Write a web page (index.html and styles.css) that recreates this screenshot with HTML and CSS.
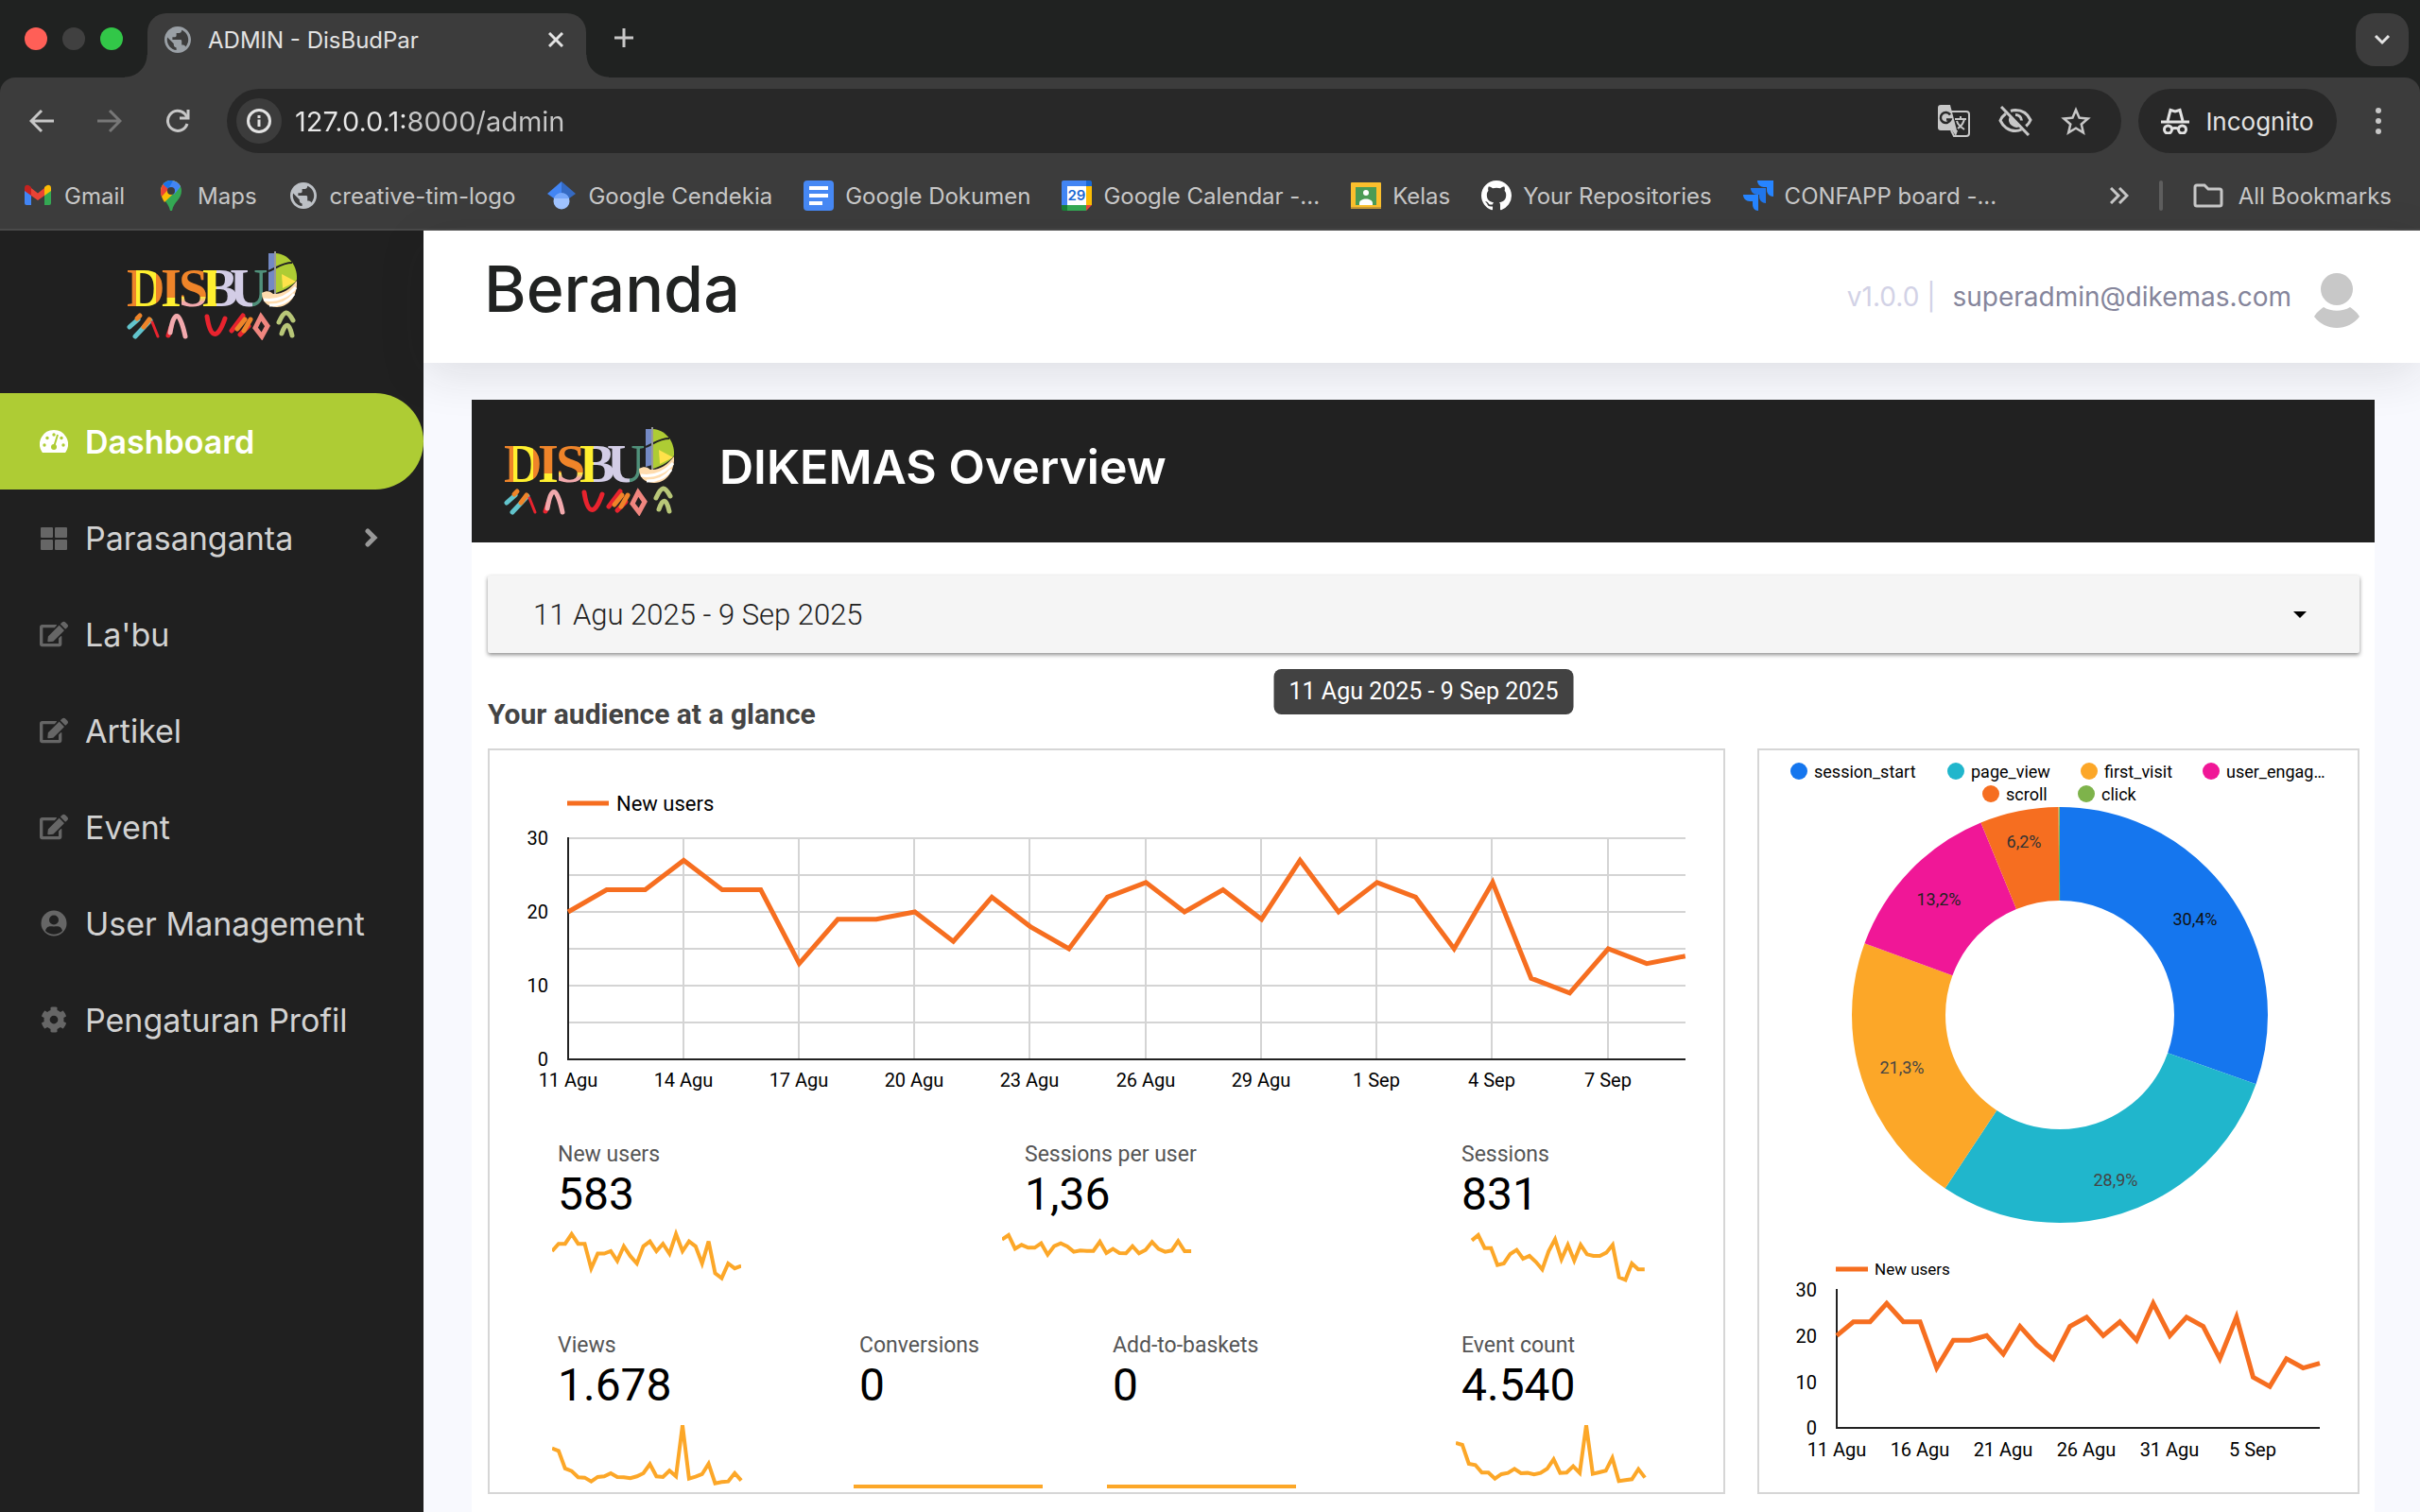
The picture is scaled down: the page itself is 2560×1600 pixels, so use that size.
FILE: index.html
```html
<!DOCTYPE html>
<html lang="id">
<head>
<meta charset="utf-8">
<meta name="viewport" content="width=device-width, initial-scale=1">
<title>ADMIN - DisBudPar</title>
<link rel="stylesheet" href="styles.css">
</head>
<body>

<svg class="defs" aria-hidden="true">
  <defs>
    <linearGradient id="d-fill"><stop offset=".24" stop-color="#ef8429"/><stop offset=".24" stop-color="#fff02f"/><stop offset=".76" stop-color="#fff02f"/><stop offset=".76" stop-color="#ef8429"/></linearGradient>
    <linearGradient id="i-fill" x2="0" y2="1"><stop offset=".66" stop-color="#ef8429"/><stop offset=".66" stop-color="#fff02f"/></linearGradient>
    <linearGradient id="s-fill" x2="0" y2="1"><stop offset=".64" stop-color="#ef8429"/><stop offset=".64" stop-color="#fff02f"/><stop offset=".74" stop-color="#f2a9ad"/></linearGradient>
    <linearGradient id="b-fill"><stop offset=".4" stop-color="#fff02f"/><stop offset=".4" stop-color="#d3cde6"/></linearGradient>
    <linearGradient id="u-fill"><stop offset=".6" stop-color="#d3cde6"/><stop offset=".6" stop-color="#50907a"/></linearGradient>
    <symbol id="logo" viewBox="0 0 180 94">
      <g class="logo-text">
        <text y="58" x="0" fill="url(#d-fill)">D</text>
        <text y="58" x="36" fill="url(#i-fill)">I</text>
        <text y="58" x="55" fill="url(#s-fill)">S</text>
        <text y="58" x="80" fill="url(#b-fill)">B</text>
        <text y="58" x="109" fill="url(#u-fill)">U</text>
      </g>
      <path d="M150 2v40l7-2V2z" fill="#7489c4"/>
      <path d="M158 2c13 1 23 13 22 28-4 6-11 10-22 14z" fill="#aecc34"/>
      <path d="M164 24l15 8-14 7z" fill="#ffe24a"/>
      <path d="M150 21c8-3 14-9 25-9" fill="none" stroke="#222" stroke-width="2"/>
      <path d="M157 0v46" stroke="#999" stroke-width="2"/>
      <path d="M143 44c5-3 9-2 12 1 9 1 18-5 25-14 1 17-9 28-21 28-9 0-16-5-16-15z" fill="#ffdcae"/>
      <path d="M145 51c14 2 26-4 34-13M151 57c12 0 21-5 26-12" fill="none" stroke="#fff" stroke-width="3"/>
      <g fill="none" stroke-width="5" stroke-linecap="round">
        <path d="M3 80l9-8M9 90l16-17" stroke="#62c4cc"/>
        <path d="M11 71l3-3M18 80l6-8" stroke="#ef8429"/>
        <path d="M27 75l6 15" stroke="#e8232e" stroke-width="3"/>
        <path d="M44 89l3-9" stroke="#e8232e"/>
        <path d="M46 86c4-24 10-24 16 4" stroke="#f2a9ad"/>
        <path d="M85 69c3 20 10 28 19 2" stroke="#e8232e"/>
        <path d="M111 84l12-16M120 88l9-9" stroke="#e8232e"/>
        <path d="M117 82l8-10M124 84l7-12" stroke="#ef8429"/>
        <path d="M142 69l7 10-6 11-7-9z" stroke="#f0867f"/>
        <path d="M161 75c6-13 9-13 15-2M164 87c4-12 8-12 11 2" stroke="#b8c778"/>
      </g>
    </symbol>
    <symbol id="icon-globe" viewBox="2 2 20 20"><path fill="currentColor" d="M12 2C6.48 2 2 6.48 2 12s4.480 10 10 10 10-4.480 10-10S17.520 2 12 2zm-1 17.930c-3.950-.49-7-3.850-7-7.930 0-.62.08-1.210.21-1.790L9 15v1c0 1.100.9 2 2 2v1.930zm6.900-2.540c-.26-.81-1-1.390-1.900-1.390h-1v-3c0-.55-.45-1-1-1H8v-2h2c.55 0 1-.45 1-1V7h2c1.100 0 2-.9 2-2v-.41c2.930 1.190 5 4.060 5 7.410 0 2.080-.8 3.970-2.100 5.390z"/></symbol>
    <symbol id="icon-edit" viewBox="0 0 576 512"><path fill="currentColor" d="M402.6 83.2l90.2 90.2c3.8 3.8 3.8 10 0 13.8L274.4 405.6l-92.8 10.3c-12.4 1.4-22.9-9.1-21.5-21.5l10.3-92.8L388.8 83.2c3.8-3.8 10-3.8 13.8 0zm162-22.900l-48.800-48.800c-15.200-15.200-39.900-15.200-55.200 0l-35.400 35.400c-3.800 3.800-3.800 10 0 13.800l90.200 90.200c3.800 3.800 10 3.800 13.800 0l35.400-35.400c15.200-15.300 15.200-40 0-55.200zM384 346.200V448H64V128h229.800c3.200 0 6.200-1.300 8.500-3.500l40-40c7.600-7.600 2.200-20.500-8.500-20.500H48C21.500 64 0 85.500 0 112v352c0 26.500 21.500 48 48 48h352c26.500 0 48-21.500 48-48V306.200c0-10.700-12.900-16-20.500-8.500l-40 40c-2.200 2.300-3.500 5.300-3.500 8.500z"/></symbol>
    <polyline id="new-users" vector-effect="non-scaling-stroke" points="0,20 1,23 2,23 3,27 4,23 5,23 6,13 7,19 8,19 9,20 10,16 11,22 12,18 13,15 14,22 15,24 16,20 17,23 18,19 19,27 20,20 21,24 22,22 23,15 24,24 25,11 26,9 27,15 28,13 29,14"/>
  </defs>
</svg>

<header class="browser">
  <div class="tab-strip">
    <div class="lights"><i class="light light-red"></i><i class="light light-off"></i><i class="light light-green"></i></div>
    <div class="tab">
      <svg class="tab-icon" width="28" height="28"><use href="#icon-globe"/></svg>
      <span class="tab-title">ADMIN - DisBudPar</span>
      <button class="plain" aria-label="Close tab"><svg width="16" height="16" viewBox="0 0 16 16" fill="none" stroke="#e3e3e3" stroke-width="3"><path d="M1 1l14 14M15 1L1 15"/></svg></button>
    </div>
    <button class="plain new-tab" aria-label="New tab"><svg width="20" height="20" viewBox="0 0 20 20" fill="none" stroke="#c7c7c7" stroke-width="3"><path d="M10 0v20M0 10h20"/></svg></button>
    <button class="plain tab-search" aria-label="Search tabs"><svg width="20" height="12" viewBox="0 0 20 12" fill="none" stroke="#e3e3e3" stroke-width="3"><path d="M3 2l7 7 7-7"/></svg></button>
  </div>

  <div class="toolbar">
    <button class="plain nav-btn" aria-label="Back"><svg width="26" height="26" viewBox="0 0 26 26" fill="none" stroke="#c7c7c7" stroke-width="3"><path d="M26 13H3M13 2L2 13l11 11"/></svg></button>
    <button class="plain nav-btn" aria-label="Forward"><svg width="26" height="26" viewBox="0 0 26 26" fill="none" stroke="#777" stroke-width="3"><path d="M0 13h23M13 2l11 11-11 11"/></svg></button>
    <button class="plain nav-btn" aria-label="Reload"><svg width="26" height="26" viewBox="0 0 26 26" fill="none" stroke="#c7c7c7" stroke-width="3"><path d="M23 16a10.500 10.500 0 1 1-2.500-10.500L23 9"/><path d="M24 1v9h-9"/></svg></button>
    <div class="omnibox">
      <button class="plain site-info" aria-label="Site information"><svg width="28" height="28" viewBox="0 0 28 28" fill="none" stroke="#e3e3e3" stroke-width="3"><circle cx="14" cy="14" r="11.500"/><path d="M14 12.500V20M14 8v3"/></svg></button>
      <input class="url" type="text" aria-label="Address" value="127.0.0.1:8000/admin">
      <button class="plain" aria-label="Translate"><svg width="34" height="34" viewBox="0 0 34 34"><path d="M14 7h16a3 3 0 0 1 3 3v20a3 3 0 0 1-3 3H17l-3-6" fill="none" stroke="#c7c7c7" stroke-width="2"/><path d="M3 0h10l7 27H3a3 3 0 0 1-3-3V3a3 3 0 0 1 3-3z" fill="#c7c7c7"/><path d="M13 10.500a5.500 5.500 0 1 0 .5 5H9" fill="none" stroke="#282828" stroke-width="2.500"/><path d="M18 15h12M24 12v3M28 15c-1 5-4 8-7 10M20 17c1 4 5 7 8 9" fill="none" stroke="#c7c7c7" stroke-width="2"/><path d="M15 27l4 6 2-6z" fill="#c7c7c7"/></svg></button>
      <button class="plain" aria-label="Third-party cookies blocked"><svg width="36" height="32" viewBox="0 0 36 32" fill="none" stroke="#c7c7c7" stroke-width="3"><path d="M13 5.500a17 17 0 0 1 5-1c7 0 13 4 16 10.500-1 2.500-2.700 4.700-4.800 6.500M24.500 25a17 17 0 0 1-6.500 1.500C11 26.500 5 22 2 15.500c1.300-3 3.300-5.300 5.800-7.200"/><path d="M12 11a8 8 0 0 0 12 10z" fill="#c7c7c7" stroke="none"/><path d="M18 9.500a6.500 6.500 0 0 1 6.500 6"/><path d="M3 1l29 30"/></svg></button>
      <button class="plain" aria-label="Bookmark this page"><svg width="32" height="30" viewBox="2 2 20 19"><path fill="#c7c7c7" d="M22 9.240l-7.190-.62L12 2 9.190 8.630 2 9.240l5.460 4.730L5.820 21 12 17.270 18.180 21l-1.630-7.030L22 9.240zM12 15.400l-3.760 2.270 1-4.280-3.320-2.880 4.380-.38L12 6.100l1.710 4.040 4.380.38-3.320 2.880 1 4.280L12 15.400z"/></svg></button>
    </div>
    <button class="plain incognito"><svg width="30" height="28" viewBox="0 0 30 28" fill="none" stroke="#e3e3e3" stroke-width="3"><path d="M0 15h30"/><path d="M7 14l3-11.500 5 1.500 5-1.500L23 14"/><circle cx="7.500" cy="23" r="4"/><circle cx="22.500" cy="23" r="4"/><path d="M11 22.500c3-1.500 5-1.500 8 0"/></svg><span>Incognito</span></button>
    <button class="plain menu-btn" aria-label="Menu"><svg width="6" height="28" viewBox="0 0 6 28" fill="#c7c7c7"><circle cx="3" cy="3" r="3"/><circle cx="3" cy="14" r="3"/><circle cx="3" cy="25" r="3"/></svg></button>
  </div>

  <nav class="bookmarks" aria-label="Bookmarks">
    <a href="#"><svg width="32" height="32" viewBox="0 0 32 32"><path d="M2 10v14a2 2 0 0 0 2 2h5V14z" fill="#4285f4"/><path d="M30 10v14a2 2 0 0 1-2 2h-5V14z" fill="#34a853"/><path d="M9 8l7 5.500L23 8v8l-7 5-7-5z" fill="#ea4335"/><path d="M2 11V8c0-3 3-4 5-2.500L9 7v9z" fill="#c5221f"/><path d="M30 11V8c0-3-3-4-5-2.500L23 7v9z" fill="#fbbc04"/></svg>Gmail</a>
    <a href="#"><svg width="32" height="32" viewBox="0 0 32 32"><path d="M16 0a11 11 0 0 1 11 11c0 9-8 11-10 21h-2C13 22 5 20 5 11A11 11 0 0 1 16 0z" fill="#34a853"/><path d="M16 0a11 11 0 0 1 10 6.500L9 23c-2-3-4-7-4-12A11 11 0 0 1 16 0z" fill="#fbbc04"/><path d="M16 0a11 11 0 0 1 10 6.500L19 15 7.500 4A11 11 0 0 1 16 0z" fill="#4285f4"/><path d="M7.500 4l6 5L6 17A14 14 0 0 1 7.500 4z" fill="#ea4335"/><path d="M7.500 4A11 11 0 0 1 18 0.200L13 9z" fill="#1a73e8"/><circle cx="16" cy="11" r="4" fill="#3c3c3c"/></svg>Maps</a>
    <a href="#"><svg class="globe" width="32" height="28"><use href="#icon-globe"/></svg>creative-tim-logo</a>
    <a href="#"><svg width="32" height="32" viewBox="0 0 32 32"><path d="M16 1L1 14l7 5h8z" fill="#4285f4"/><path d="M16 1l15 13-7 5h-8z" fill="#356ac3"/><circle cx="16" cy="22" r="8.500" fill="#a0c3ff"/><path d="M8 19a8.500 8.500 0 0 1 16 0z" fill="#76a7fa"/></svg>Google Cendekia</a>
    <a href="#"><svg width="32" height="32" viewBox="0 0 32 32"><rect width="32" height="32" rx="4" fill="#4688f4"/><path d="M6 8h20M6 16h20M6 24h14" stroke="#fff" stroke-width="4"/></svg>Google Dokumen</a>
    <a href="#"><svg width="32" height="32" viewBox="0 0 32 32"><path d="M0 2a2 2 0 0 1 2-2h24v6H6v20H0z" fill="#4285f4"/><path d="M26 0h4a2 2 0 0 1 2 2v4h-6z" fill="#1967d2"/><path d="M26 6h6v20h-6z" fill="#fbbc04"/><path d="M6 26h20v6H6z" fill="#34a853"/><path d="M0 26h6v6H2a2 2 0 0 1-2-2z" fill="#188038"/><path d="M26 26h6l-6 6z" fill="#ea4335"/><path d="M6 6h20v20H6z" fill="#fff"/><text x="16" y="21" class="cal-day">29</text></svg>Google Calendar -...</a>
    <a href="#"><svg width="32" height="32" viewBox="0 0 32 32"><rect y="2" width="32" height="28" rx="1" fill="#fbbf2d"/><rect y="28" width="32" height="2" fill="#c99a34"/><rect x="5" y="7" width="22" height="19" fill="#4b9b55"/><circle cx="16" cy="13" r="3" fill="#fff"/><path d="M9 24c0-6 14-6 14 0v2H9z" fill="#fff"/></svg>Kelas</a>
    <a href="#"><svg width="32" height="32" viewBox="0 0 16 16"><path fill="#fff" d="M8 0C3.580 0 0 3.580 0 8c0 3.540 2.290 6.530 5.470 7.590.4.07.55-.17.55-.38 0-.19-.01-.82-.01-1.490-2.010.37-2.530-.49-2.690-.94-.09-.23-.48-.94-.82-1.130-.28-.15-.68-.52-.01-.53.63-.01 1.080.58 1.230.82.72 1.210 1.870.87 2.330.66.07-.52.28-.87.51-1.070-1.780-.2-3.640-.89-3.640-3.950 0-.87.31-1.590.82-2.150-.08-.2-.36-1.020.08-2.120 0 0 .67-.21 2.200.82.64-.18 1.320-.27 2-.27s1.360.09 2 .27c1.530-1.040 2.200-.82 2.200-.82.44 1.100.16 1.920.08 2.120.51.56.82 1.270.82 2.150 0 3.070-1.870 3.750-3.650 3.950.29.25.54.73.54 1.480 0 1.070-.01 1.930-.01 2.200 0 .21.15.46.55.38A8.010 8.010 0 0 0 16 8c0-4.420-3.580-8-8-8z"/></svg>Your Repositories</a>
    <a href="#"><svg width="32" height="32" viewBox="0 0 32 32" fill="#2684ff"><path d="M15 0h17v17c-4 0-7-3-7-7V7h-3c-4 0-7-3-7-7z"/><path d="M8 8h16v16c-4 0-7-3-7-7v-2h-2c-4 0-7-3-7-7z" fill="#2176ea"/><path d="M0 15h16v17c-4 0-6-3-6-7v-3H7c-4 0-7-3-7-7z"/></svg>CONFAPP board -...</a>
    <div class="bookmarks-end">
      <button class="plain" aria-label="More bookmarks"><svg width="20" height="18" viewBox="0 0 20 18" fill="none" stroke="#c7c7c7" stroke-width="3"><path d="M1 1l8 8-8 8M10 1l8 8-8 8"/></svg></button>
      <span class="divider"></span>
      <a class="all" href="#"><svg width="32" height="26" viewBox="0 0 32 26" fill="none" stroke="#c7c7c7" stroke-width="3"><path d="M2 4a2 2 0 0 1 2-2h8l4 4h12a2 2 0 0 1 2 2v14a2 2 0 0 1-2 2H4a2 2 0 0 1-2-2z"/></svg>All Bookmarks</a>
    </div>
  </nav>
</header>

<div class="app">
  <aside class="sidebar">
    <svg class="brand" width="180" height="94" role="img" aria-label="DISBUD"><use href="#logo"/></svg>
    <nav class="side-nav" aria-label="Menu utama">
      <a class="active" href="#"><svg width="30" height="26" viewBox="0 0 30 26"><path d="M15 1a15 15 0 0 1 13 22.500c-.5 1-1 1.500-2 1.500H4c-1 0-1.500-.5-2-1.500A15 15 0 0 1 15 1z" fill="currentColor"/><g fill="#aecc34"><circle cx="5" cy="17" r="1.700"/><circle cx="8" cy="9.500" r="1.700"/><circle cx="15" cy="6" r="1.700"/><circle cx="23" cy="9.500" r="1.700"/><circle cx="25" cy="17" r="1.700"/><circle cx="15" cy="19" r="3"/></g><path d="M15 19l4-13" stroke="#aecc34" stroke-width="2"/></svg>Dashboard</a>
      <a href="#"><svg width="30" height="26" viewBox="0 0 30 26" fill="currentColor"><rect x="1" y="2" width="13" height="11" rx="1"/><rect x="16" y="2" width="13" height="11" rx="1"/><rect x="1" y="15" width="13" height="11" rx="1"/><rect x="16" y="15" width="13" height="11" rx="1"/></svg>Parasanganta<svg class="caret" width="14" height="20" viewBox="0 0 14 20" fill="none" stroke="currentColor" stroke-width="5" stroke-linecap="round"><path d="M3 3l7 7-7 7"/></svg></a>
      <a href="#"><svg width="30" height="28"><use href="#icon-edit"/></svg>La'bu</a>
      <a href="#"><svg width="30" height="28"><use href="#icon-edit"/></svg>Artikel</a>
      <a href="#"><svg width="30" height="28"><use href="#icon-edit"/></svg>Event</a>
      <a href="#"><svg width="30" height="28" viewBox="0 0 30 28"><circle cx="15" cy="14" r="13.500" fill="currentColor"/><circle cx="15" cy="10.500" r="5" fill="#202020"/><path d="M6 22c2-6 5-4.500 9-4.500s7-1.500 9 4.500c-5 5-13 5-18 0z" fill="#202020"/></svg>User Management</a>
      <a href="#"><svg width="30" height="28" viewBox="-16 0 544 512"><path fill="currentColor" d="M487.400 315.700l-42.600-24.600c4.300-23.200 4.300-47 0-70.200l42.600-24.600c4.900-2.800 7.100-8.600 5.500-14-11.100-35.600-30-67.800-54.700-94.600-3.800-4.100-10-5.100-14.800-2.300L380.800 110c-17.900-15.400-38.500-27.300-60.800-35.100V25.800c0-5.600-3.900-10.500-9.400-11.700-36.700-8.200-74.300-7.800-109.200 0-5.500 1.200-9.400 6.100-9.400 11.700V75c-22.200 7.900-42.800 19.800-60.800 35.100L88.700 85.500c-4.900-2.800-11-1.900-14.800 2.300-24.700 26.700-43.600 58.900-54.700 94.600-1.700 5.400.6 11.200 5.500 14L67.300 221c-4.300 23.200-4.300 47 0 70.200l-42.600 24.600c-4.900 2.800-7.100 8.600-5.500 14 11.100 35.600 30 67.800 54.700 94.600 3.800 4.100 10 5.100 14.800 2.300l42.600-24.600c17.900 15.400 38.500 27.300 60.800 35.100v49.200c0 5.600 3.900 10.500 9.400 11.700 36.700 8.200 74.300 7.800 109.200 0 5.500-1.200 9.400-6.100 9.400-11.700v-49.200c22.200-7.900 42.800-19.800 60.800-35.100l42.600 24.600c4.900 2.800 11 1.900 14.800-2.300 24.700-26.700 43.600-58.900 54.700-94.600 1.500-5.500-.7-11.300-5.600-14.100zM256 336c-44.100 0-80-35.900-80-80s35.900-80 80-80 80 35.900 80 80-35.900 80-80 80z"/></svg>Pengaturan Profil</a>
    </nav>
  </aside>

  <main class="main">
    <header class="topbar">
      <h1>Beranda</h1>
      <div class="account">
        <span class="version">v1.0.0 |</span>
        <a class="email" href="#">superadmin@dikemas.com</a>
        <svg width="48" height="66" viewBox="0 -8 48 66" fill="#c8c8c8" role="img" aria-label="Avatar"><circle cx="24" cy="17" r="17"/><path d="M0 46c3-5 7-8 10-10 8 5 20 5 28 0 3 2 7 5 10 10-12 16-36 16-48 0z"/></svg>
      </div>
    </header>

    <section class="report">
      <div class="banner">
        <svg width="180" height="94" role="img" aria-label="DISBUD"><use href="#logo"/></svg>
        <h2>DIKEMAS Overview</h2>
      </div>
      <div class="report-body">
        <div class="date-range">
          <select aria-label="Rentang tanggal"><option>11 Agu 2025 - 9 Sep 2025</option></select>
          <svg width="14" height="7" viewBox="0 0 14 7"><path d="M0 0h14L7 7z"/></svg>
          <div class="tooltip" role="tooltip">11 Agu 2025 - 9 Sep 2025</div>
        </div>
        <h3>Your audience at a glance</h3>

        <div class="cards">
          <article class="card">
            <svg class="chart" viewBox="0 0 1305 414" role="img" aria-label="New users per hari">
              <path d="M82 56h44" class="series"/>
              <text x="134" y="64" class="legend-lg">New users</text>
              <path class="grid" d="M83 93h1182M83 132h1182M83 171h1182M83 210h1182M83 249h1182M83 288h1182M205 93v234M327 93v234M449 93v234M571 93v234M694 93v234M816 93v234M938 93v234M1060 93v234M1183 93v234"/>
              <path class="axis" d="M83 92v235h1182"/>
              <use href="#new-users" class="series" transform="translate(83 327) scale(40.750 -7.800)"/>
              <g class="tick end"><text x="62" y="100">30</text><text x="62" y="178">20</text><text x="62" y="256">10</text><text x="62" y="334">0</text></g>
              <g class="tick mid"><text x="83" y="356">11 Agu</text><text x="205" y="356">14 Agu</text><text x="327" y="356">17 Agu</text><text x="449" y="356">20 Agu</text><text x="571" y="356">23 Agu</text><text x="694" y="356">26 Agu</text><text x="816" y="356">29 Agu</text><text x="938" y="356">1 Sep</text><text x="1060" y="356">4 Sep</text><text x="1183" y="356">7 Sep</text></g>
            </svg>
            <div class="metrics metrics-top">
              <dl class="metric"><dt>New users</dt><dd>583</dd>
                <dd class="spark"><svg width="200" height="60"><use href="#new-users" transform="translate(0 76) scale(6.900 -2.600)"/></svg></dd></dl>
              <dl class="metric metric-inset"><dt>Sessions per user</dt><dd>1,36</dd>
                <dd class="spark"><svg width="202" height="60"><polyline vector-effect="non-scaling-stroke" transform="translate(0 -120) scale(6.900 .3333)" points="0,395 1,381 2,424 3,412 4,421 5,421 6,407 7,443 8,416 9,407 10,417 11,434 12,430 13,431 14,431 15,402 16,438 17,425 18,438 19,439 20,416 21,439 22,428 23,403 24,425 25,434 26,430 27,400 28,432 29,432"/></svg></dd></dl>
              <dl class="metric"><dt>Sessions</dt><dd>831</dd>
                <dd class="spark"><svg width="202" height="60"><polyline vector-effect="non-scaling-stroke" transform="translate(17 -120) scale(6.770 .3333)" points="0,398 1,381 2,422 3,422 4,476 5,471 6,441 7,428 8,456 9,447 10,466 11,490 12,432 13,394 14,458 15,412 16,462 17,412 18,442 19,447 20,447 21,437 22,412 23,515 24,523 25,471 26,490 27,490"/></svg></dd></dl>
            </div>
            <div class="metrics metrics-bottom">
              <dl class="metric"><dt>Views</dt><dd>1.678</dd>
                <dd class="spark"><svg width="202" height="76"><polyline vector-effect="non-scaling-stroke" transform="translate(0 -322) scale(6.900 .3333)" points="0,1058 1,1066 2,1122 3,1130 4,1150 5,1151 6,1163 7,1149 8,1147 9,1137 10,1149 11,1150 12,1153 13,1147 14,1137 15,1108 16,1147 17,1149 18,1129 19,1147 20,985 21,1154 22,1148 23,1140 24,1107 25,1169 26,1165 27,1163 28,1137 29,1160"/></svg></dd></dl>
              <dl class="metric"><dt>Conversions</dt><dd>0</dd>
                <dd class="spark"><svg width="202" height="76"><path d="M0 71h200"/></svg></dd></dl>
              <dl class="metric"><dt>Add-to-baskets</dt><dd>0</dd>
                <dd class="spark"><svg width="202" height="76"><path d="M0 71h200"/></svg></dd></dl>
              <dl class="metric"><dt>Event count</dt><dd>4.540</dd>
                <dd class="spark"><svg width="202" height="76"><polyline vector-effect="non-scaling-stroke" transform="translate(0 -322) scale(6.900 .3333)" points="0,1041 1,1047 2,1107 3,1111 4,1135 5,1135 6,1154 7,1140 8,1136 9,1123 10,1137 11,1136 12,1141 13,1136 14,1123 15,1093 16,1136 17,1135 18,1115 19,1136 20,985 21,1139 22,1134 23,1129 24,1088 25,1162 26,1159 27,1156 28,1124 29,1151"/></svg></dd></dl>
            </div>
          </article>

          <article class="card">
            <svg class="chart" viewBox="0 0 633 500" role="img" aria-label="Event count per event">
              <g class="legend-sm">
                <circle cx="42" cy="22" r="9" fill="#1576ee"/><text x="58" y="29">session_start</text>
                <circle cx="208" cy="22" r="9" fill="#20b6cc"/><text x="224" y="29">page_view</text>
                <circle cx="349" cy="22" r="9" fill="#fca728"/><text x="365" y="29">first_visit</text>
                <circle cx="478" cy="22" r="9" fill="#f01797"/><text x="494" y="29">user_engag…</text>
                <circle cx="245" cy="46" r="9" fill="#f66e20"/><text x="261" y="53">scroll</text>
                <circle cx="346" cy="46" r="9" fill="#7eb34b"/><text x="362" y="53">click</text>
              </g>
              <g fill="none" stroke-width="99" transform="rotate(-90 318 280)">
                <circle cx="318" cy="280" r="170.500" pathLength="1000" stroke="#1576ee" stroke-dasharray="304 696"/>
                <circle cx="318" cy="280" r="170.500" pathLength="1000" stroke="#20b6cc" stroke-dasharray="289 711" stroke-dashoffset="-304"/>
                <circle cx="318" cy="280" r="170.500" pathLength="1000" stroke="#fca728" stroke-dasharray="213 787" stroke-dashoffset="-593"/>
                <circle cx="318" cy="280" r="170.500" pathLength="1000" stroke="#f01797" stroke-dasharray="132 868" stroke-dashoffset="-806"/>
                <circle cx="318" cy="280" r="170.500" pathLength="1000" stroke="#f66e20" stroke-dasharray="61 939" stroke-dashoffset="-938"/>
                <circle cx="318" cy="280" r="170.500" pathLength="1000" stroke="#7eb34b" stroke-dasharray="1 999" stroke-dashoffset="-999"/>
              </g>
              <g class="slice mid">
                <text x="461" y="185" fill="#111">30,4%</text><text x="377" y="461" fill="#444">28,9%</text><text x="151" y="342" fill="#444">21,3%</text><text x="190" y="164" fill="#222">13,2%</text><text x="280" y="103" fill="#333">6,2%</text>
              </g>
            </svg>
            <svg class="chart" viewBox="0 500 633 285" role="img" aria-label="New users">
              <path d="M81 549h34" class="series"/>
              <text x="122" y="555" class="legend-xs">New users</text>
              <path class="axis" d="M82 570v147h511"/>
              <use href="#new-users" class="series" transform="translate(82 717) scale(17.620 -4.880)"/>
              <g class="tick end"><text x="61" y="578">30</text><text x="61" y="627">20</text><text x="61" y="676">10</text><text x="61" y="724">0</text></g>
              <g class="tick mid"><text x="82" y="747">11 Agu</text><text x="170" y="747">16 Agu</text><text x="258" y="747">21 Agu</text><text x="346" y="747">26 Agu</text><text x="434" y="747">31 Agu</text><text x="522" y="747">5 Sep</text></g>
            </svg>
          </article>
        </div>
      </div>
    </section>
  </main>
</div>
</body>
</html>
```

FILE: styles.css
```css
* { box-sizing: border-box; }

body {
  margin: 0;
  min-height: 100vh;
  display: flex;
  flex-direction: column;
  font-family: Roboto, sans-serif;
  background: #f8f9fe;
}

svg { display: block; flex: none; }
a { color: inherit; text-decoration: none; }
h1, h2, h3, dl, dd { margin: 0; }

.defs { position: absolute; width: 0; height: 0; }

.plain {
  display: flex;
  align-items: center;
  justify-content: center;
  padding: 0;
  border: 0;
  background: none;
  font: inherit;
  color: inherit;
}

/* Browser window */
.browser {
  background: #202221;
  font-family: Inter, sans-serif;
  font-size: 24px;
  color: #c7c7c7;
}

.tab-strip {
  display: flex;
  align-items: flex-end;
  height: 82px;
  padding: 0 12px 0 26px;
}

.lights { display: flex; gap: 16px; width: 130px; padding-bottom: 29px; }
.light { width: 24px; height: 24px; border-radius: 50%; }
.light-red { background: #ff5f57; }
.light-off { background: #404040; }
.light-green { background: #32c748; }

.tab {
  position: relative;
  display: flex;
  align-items: center;
  gap: 18px;
  width: 464px;
  height: 68px;
  padding: 0 24px 12px 18px;
  border-radius: 20px 20px 0 0;
  background: #3c3c3c;
  color: #e3e3e3;
}
.tab::before,
.tab::after {
  content: "";
  position: absolute;
  bottom: 0;
  width: 24px;
  height: 24px;
}
.tab::before { right: 100%; background: radial-gradient(circle at 0 0, transparent 23px, #3c3c3c 24px); }
.tab::after { left: 100%; background: radial-gradient(circle at 100% 0, transparent 23px, #3c3c3c 24px); }
.tab-icon { color: #9aa0a6; }
.tab-title { flex: 1; }

.new-tab { width: 80px; height: 84px; }
.tab-search {
  width: 56px;
  height: 56px;
  margin: 0 0 12px auto;
  border-radius: 20px;
  background: #3c3c3c;
}

.toolbar {
  display: flex;
  align-items: center;
  height: 80px;
  padding: 12px 24px 0 8px;
  border-radius: 16px 16px 0 0;
  background: #3c3c3c;
}
.nav-btn { width: 72px; height: 68px; }

.omnibox {
  flex: 1;
  display: flex;
  align-items: center;
  gap: 30px;
  height: 68px;
  margin: 0 18px 0 16px;
  padding: 0 32px 0 10px;
  border-radius: 34px;
  background: #282828;
}
.site-info { width: 48px; height: 48px; margin-right: -16px; border-radius: 50%; background: #3c3c3c; }
.url {
  flex: 1;
  min-width: 0;
  padding: 0;
  border: 0;
  outline: 0;
  font: 29px Inter, sans-serif;
  color: transparent;
  background: linear-gradient(90deg, #e8e8e8 119px, #c7c7c7 119px);
  -webkit-background-clip: text;
  background-clip: text;
}

.incognito {
  gap: 17px;
  width: 210px;
  height: 68px;
  border-radius: 34px;
  background: #282828;
  font-size: 26px;
  color: #e3e3e3;
}
.menu-btn { width: 40px; height: 68px; margin-left: 24px; }

.bookmarks {
  display: flex;
  align-items: center;
  gap: 33px;
  height: 82px;
  padding: 10px 30px 0 24px;
  border-bottom: 2px solid #4a4a4a;
  background: #3c3c3c;
  white-space: nowrap;
}
.bookmarks a { display: flex; align-items: center; gap: 12px; }
.globe { color: #bdc1c6; }
.cal-day { font-size: 15px; font-weight: 600; fill: #1967d2; text-anchor: middle; }
.bookmarks-end { display: flex; align-items: center; gap: 32px; margin-left: auto; }
.bookmarks-end .all { gap: 16px; }
.divider { width: 4px; height: 32px; border-radius: 2px; background: #5e5e5e; }

/* Admin shell */
.app { flex: 1; display: flex; }

.sidebar {
  flex: none;
  width: 448px;
  padding-top: 22px;
  background: #202020;
  font-family: Inter, sans-serif;
  font-size: 34px;
  color: #d2d2d2;
}
.brand { margin: 0 auto 56px; }
.logo-text { font: bold 56px "Liberation Serif", serif; }

.side-nav { display: flex; flex-direction: column; }
.side-nav a {
  display: flex;
  align-items: center;
  gap: 18px;
  height: 102px;
  padding: 0 48px 0 42px;
}
.side-nav a svg { color: #666; }
.side-nav .caret { margin-left: auto; color: #999; }
.side-nav .active {
  border-radius: 0 51px 51px 0;
  background: #aecc34;
  font-weight: 600;
  color: #fff;
}
.side-nav .active svg { color: #fff; }

.main { flex: 1; min-width: 0; display: flex; flex-direction: column; }

.topbar {
  position: relative;
  display: flex;
  justify-content: space-between;
  height: 140px;
  padding: 0 64px 0 64px;
  background: #fff;
  box-shadow: 0 12px 50px rgba(32, 32, 32, 0.12);
  font-family: Inter, sans-serif;
}
.topbar h1 { font-size: 68px; line-height: 122px; font-weight: 500; color: #202221; }
.account { display: flex; align-items: center; font-size: 28px; color: #85859b; }
.version { margin-right: 18px; color: #d2d2e6; }
.email { margin-right: 24px; }

.report {
  position: relative;
  flex: 1;
  margin: 39px 48px 0 51px;
  background: #fff;
}

.banner {
  display: flex;
  align-items: center;
  gap: 48px;
  height: 151px;
  padding: 0 34px;
  background: #212121;
}
.banner h2 { padding-bottom: 9px; font: 600 50px Inter, sans-serif; color: #fff; }

.report-body { padding: 35px 16px 19px 17px; }

.date-range {
  position: relative;
  display: flex;
  align-items: center;
  height: 82px;
  padding-right: 56px;
  border-radius: 2px;
  background: #f5f5f5;
  box-shadow: 0 2px 4px rgba(0, 0, 0, 0.45);
}
.date-range select {
  flex: 1;
  height: 82px;
  padding: 0 48px;
  border: 0;
  outline: 0;
  appearance: none;
  background: none;
  font: 300 31px Roboto, sans-serif;
  color: #212121;
}
.tooltip {
  position: absolute;
  top: 100%;
  left: 50%;
  margin-top: 17px;
  transform: translateX(-50%);
  padding: 0 16px;
  border-radius: 8px;
  background: #424242;
  font-size: 25px;
  line-height: 48px;
  white-space: nowrap;
  color: #fff;
}

.report h3 { margin: 47px 0 18px; font-size: 30px; line-height: 36px; font-weight: 700; color: #444; }

.cards { display: grid; grid-template-columns: 1309fr 637fr; gap: 34px; }
.card { min-width: 0; border: 2px solid #d6d6d6; }

/* Charts */
.chart { width: 100%; height: auto; }
.series { fill: none; stroke: #f66e20; stroke-width: 5px; }
.grid { fill: none; stroke: #d4d4d4; stroke-width: 2px; }
.axis { fill: none; stroke: #222; stroke-width: 2px; }
.tick { font-size: 20px; }
.end { text-anchor: end; }
.mid { text-anchor: middle; }
.legend-lg { font-size: 22px; }
.legend-sm { font-size: 18px; }
.legend-xs { font-size: 17px; }
.slice { font-size: 18px; }

.metrics { display: grid; padding-left: 66px; }
.metrics-top { grid-template-columns: 476fr 480fr 283fr; margin-bottom: 50px; }
.metrics-bottom { grid-template-columns: 319fr 268fr 369fr 283fr; }
.metric dt, .metric dd { padding-left: 6px; }
.metric-inset dt, .metric-inset dd { padding-left: 24px; }
.metric dt { font-size: 23px; line-height: 28px; color: #555; }
.metric dd { font-size: 48px; line-height: 56px; color: #000; }
.metric .spark { margin-top: 8px; padding-left: 0; }
.spark svg { fill: none; stroke: #fca728; stroke-width: 4px; }
```
